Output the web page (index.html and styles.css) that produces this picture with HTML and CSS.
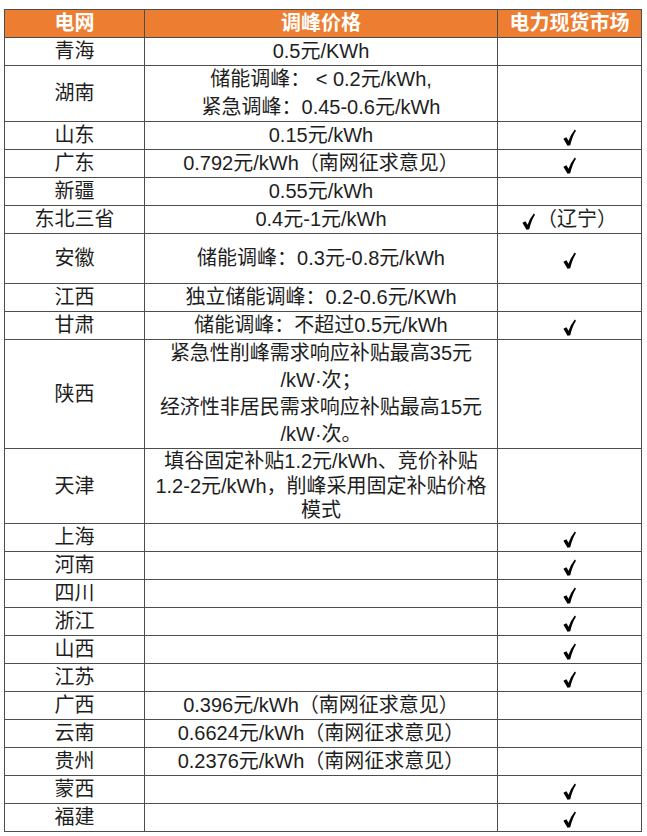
FILE: index.html
```html
<!DOCTYPE html>
<html lang="zh-CN">
<head>
<meta charset="utf-8">
<title>调峰价格</title>
<link rel="stylesheet" href="styles.css">
</head>
<body>
<svg width="0" height="0" class="defs" aria-hidden="true">
  <symbol id="ck" viewBox="0 0 14 18">
    <path d="M0.4 10.4 L3.7 8.6 L6.0 12.4 Q8.5 5.6 12.7 0.5 L14 1.7 Q10.3 7.2 7.8 17.3 L4.9 17.9 Z"/>
  </symbol>
</svg>
<table class="grid">
  <colgroup>
    <col class="c1">
    <col class="c2">
    <col class="c3">
  </colgroup>
  <thead>
    <tr><th>电网</th><th>调峰价格</th><th>电力现货市场</th></tr>
  </thead>
  <tbody>
    <tr><td>青海</td><td>0.5元/KWh</td><td></td></tr>
    <tr class="h2"><td>湖南</td><td>储能调峰： &lt; 0.2元/kWh,<br>紧急调峰：0.45-0.6元/kWh</td><td></td></tr>
    <tr><td>山东</td><td>0.15元/kWh</td><td><svg class="ck"><use href="#ck"/></svg></td></tr>
    <tr><td>广东</td><td>0.792元/kWh（南网征求意见）</td><td><svg class="ck"><use href="#ck"/></svg></td></tr>
    <tr><td>新疆</td><td>0.55元/kWh</td><td></td></tr>
    <tr><td>东北三省</td><td>0.4元-1元/kWh</td><td><svg class="ck ck-inline"><use href="#ck"/></svg>（辽宁）</td></tr>
    <tr class="tall"><td>安徽</td><td>储能调峰：0.3元-0.8元/kWh</td><td><svg class="ck"><use href="#ck"/></svg></td></tr>
    <tr><td>江西</td><td>独立储能调峰：0.2-0.6元/KWh</td><td></td></tr>
    <tr><td>甘肃</td><td>储能调峰：不超过0.5元/kWh</td><td><svg class="ck"><use href="#ck"/></svg></td></tr>
    <tr class="h4"><td>陕西</td><td>紧急性削峰需求响应补贴最高35元<br>/kW·次；<br>经济性非居民需求响应补贴最高15元<br>/kW·次。</td><td></td></tr>
    <tr class="h3"><td>天津</td><td>填谷固定补贴1.2元/kWh、竞价补贴<br>1.2-2元/kWh，削峰采用固定补贴价格<br>模式</td><td></td></tr>
    <tr><td>上海</td><td></td><td><svg class="ck"><use href="#ck"/></svg></td></tr>
    <tr><td>河南</td><td></td><td><svg class="ck"><use href="#ck"/></svg></td></tr>
    <tr><td>四川</td><td></td><td><svg class="ck"><use href="#ck"/></svg></td></tr>
    <tr><td>浙江</td><td></td><td><svg class="ck"><use href="#ck"/></svg></td></tr>
    <tr><td>山西</td><td></td><td><svg class="ck"><use href="#ck"/></svg></td></tr>
    <tr><td>江苏</td><td></td><td><svg class="ck"><use href="#ck"/></svg></td></tr>
    <tr><td>广西</td><td>0.396元/kWh（南网征求意见）</td><td></td></tr>
    <tr><td>云南</td><td>0.6624元/kWh（南网征求意见）</td><td></td></tr>
    <tr><td>贵州</td><td>0.2376元/kWh（南网征求意见）</td><td></td></tr>
    <tr><td>蒙西</td><td></td><td><svg class="ck"><use href="#ck"/></svg></td></tr>
    <tr><td>福建</td><td></td><td><svg class="ck"><use href="#ck"/></svg></td></tr>
  </tbody>
</table>
</body>
</html>
```

FILE: styles.css
```css
html, body {
  margin: 0;
  padding: 0;
  background: #ffffff;
}

body {
  padding: 9px 0 0 4px;
  font-family: "Liberation Sans", "Noto Sans CJK SC", sans-serif;
  color: #1e1e1e;
}

.defs {
  position: absolute;
  width: 0;
  height: 0;
  overflow: hidden;
}

.grid {
  border-collapse: collapse;
  table-layout: fixed;
  width: 637px;
  font-size: 20px;
}

.c1 { width: 140px; }
.c2 { width: 353px; }
.c3 { width: 144px; }

.grid th,
.grid td {
  border: 1px solid #4d4d4d;
  padding: 0 2px;
  text-align: center;
  vertical-align: middle;
  line-height: 27px;
  white-space: nowrap;
}

.grid th {
  background: #ed7d31;
  color: #ffffff;
  font-weight: bold;
}

.grid tr.h2 td { line-height: 27.5px; }
.grid tr.tall td { height: 49px; }
.grid tr.h4 td { line-height: 27px; }
.grid tr.h3 td { line-height: 24.7px; }

.ck {
  width: 13px;
  height: 17px;
  fill: #000000;
  vertical-align: -4px;
}

.ck-inline {
  margin-right: 2px;
}
```
